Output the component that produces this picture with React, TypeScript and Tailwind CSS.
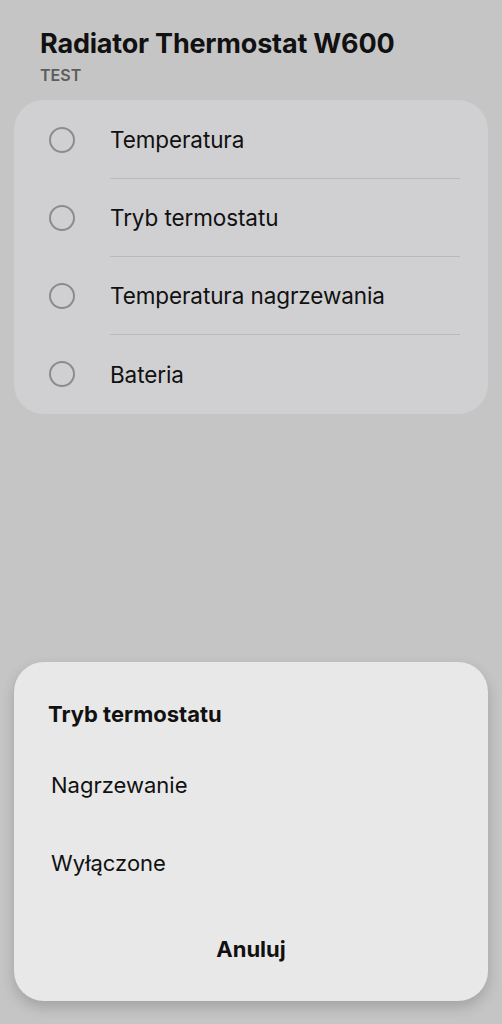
import React from "react";

const items = ["Temperatura", "Tryb termostatu", "Temperatura nagrzewania", "Bateria"];

export default function App() {
  return (
    <div
      className="w-[502px] h-[1024px] bg-[#c5c5c5] flex flex-col overflow-hidden"
      style={{ fontFamily: "Inter, 'Noto Sans', sans-serif" }}
    >
      <div className="pl-[40px] pt-[26px]">
        <div className="text-[27px] leading-[36px] font-bold text-[#111] tracking-[-0.2px]">Radiator Thermostat W600</div>
        <div className="text-[16px] leading-[22px] font-semibold text-[#5c5c5c] mt-[2px]">TEST</div>
      </div>
      <div className="mx-[14px] mt-[14px] bg-[#d0d0d2] rounded-[30px] py-[1px]">
        {items.map((t, i) => (
          <div key={t} className="flex items-center h-[78px]">
            <div className="w-[96px] flex justify-center shrink-0">
              <div className="w-[26px] h-[26px] rounded-full border-2 border-[#8c8c8c] ml-[-1px]" />
            </div>
            <div
              className={
                "flex-1 h-full flex items-center mr-[28px] " +
                (i < items.length - 1 ? "border-b border-[#b9b9bb]" : "")
              }
            >
              <span className="text-[22.5px] text-[#111] tracking-[-0.1px] mt-[1px]">{t}</span>
            </div>
          </div>
        ))}
      </div>
      <div className="flex-1" />
      <div className="mx-[14px] mb-[23px] bg-[#e8e8e8] rounded-[30px] shadow-[0_6px_14px_rgba(0,0,0,0.18)] pt-[37px] pb-[36px]">
        <div className="pl-[34px] text-[22px] leading-[30px] font-bold text-[#111]">Tryb termostatu</div>
        <div className="pl-[37px] mt-[17px] h-[78px] flex items-center text-[22px] text-[#111]">Nagrzewanie</div>
        <div className="pl-[37px] h-[78px] flex items-center text-[22px] text-[#111]">Wyłączone</div>
        <div className="mt-[31px] h-[32px] flex items-center justify-center text-[22px] font-bold text-[#111]">Anuluj</div>
      </div>
    </div>
  );
}
